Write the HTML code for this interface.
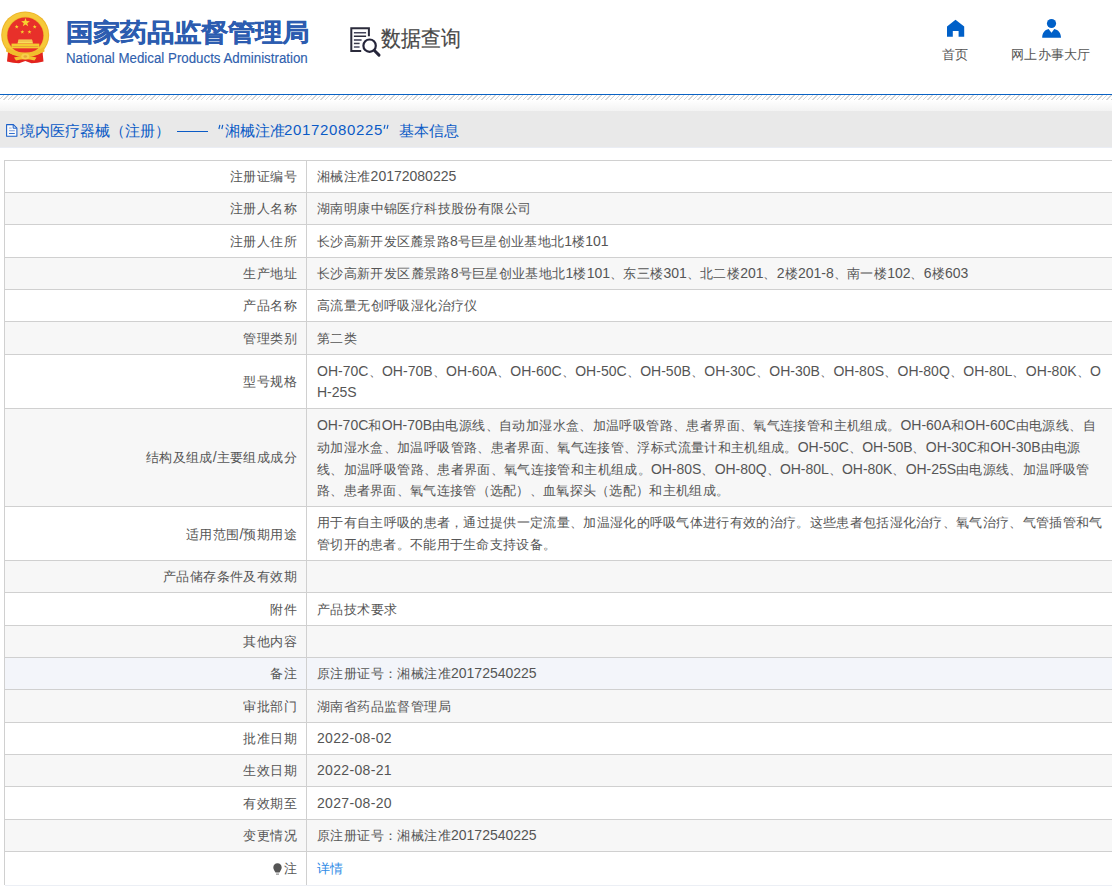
<!DOCTYPE html>
<html><head><meta charset="utf-8">
<style>
html,body{margin:0;padding:0;background:#fff;}
body{width:1112px;height:886px;overflow:hidden;position:relative;font-family:"Liberation Sans",sans-serif;color:#555;}
.abs{position:absolute;white-space:nowrap;}
#blue{position:absolute;left:0;top:94px;width:1112px;height:1px;background:#0a62c4;}
#hatch{position:absolute;left:0;top:95px;width:1112px;height:5px;
 background:repeating-linear-gradient(135deg,#fff 0,#fff 2.25px,#d6d6d6 2.25px,#d6d6d6 3.25px);}
#grad{position:absolute;left:0;top:100px;width:1112px;height:11px;background:linear-gradient(#fff,#f3f3f3);}
#bar{position:absolute;left:0;top:111px;width:1112px;height:36px;background:#e9e9e9;border-bottom:1px solid #eaedf4;}
.bt{position:absolute;top:120.6px;font-size:15px;line-height:20px;color:#0b5bc6;white-space:nowrap;}
.bt.l2{font-size:15px;letter-spacing:0.65px;}
.row{position:absolute;left:4px;width:1108px;box-sizing:border-box;border-top:1px solid #d0d0d0;border-left:1px solid #d0d0d0;}
.row .k{position:absolute;left:0;top:0;bottom:0;width:302px;border-right:1px solid #d0d0d0;display:flex;align-items:center;justify-content:flex-end;padding-right:9px;box-sizing:border-box;white-space:nowrap;font-size:13px;letter-spacing:0.4px;line-height:21.6px;}
.row .v{position:absolute;left:303px;top:0;bottom:0;right:0;display:flex;flex-direction:column;justify-content:center;padding-left:9px;white-space:nowrap;font-size:13px;line-height:21.6px;}
.ln{letter-spacing:0.4px;height:21.6px;}
.l{font-size:14px;letter-spacing:0;}
.link{color:#2f8be6;}
.bulb{display:inline-block;width:9px;height:12px;margin-right:2px;vertical-align:-1px;}
#bot{position:absolute;left:5px;width:1107px;height:1px;background:#eceff5;}
</style></head><body>
<svg class="abs" style="left:0;top:0" width="52" height="66" viewBox="0 0 52 66">
<path d="M8.5 47 L7 61.5 L13 62.8 L19 63.3 L25.3 61 L31.5 63.3 L37.5 62.8 L43.5 61.5 L42 47 Z" fill="#e3241e"/>
<ellipse cx="25.2" cy="35" rx="24" ry="23.6" fill="#eeb52a"/>
<ellipse cx="25.2" cy="35" rx="23" ry="22.6" fill="#f6c93a"/>
<circle cx="25.35" cy="35.4" r="18.6" fill="#efb32a"/>
<circle cx="25.35" cy="35.4" r="18" fill="#e8302a"/>
<polygon points="25.50,18.00 26.58,21.11 29.87,21.18 27.25,23.17 28.20,26.32 25.50,24.44 22.80,26.32 23.75,23.17 21.13,21.18 24.42,21.11" fill="#f7d230"/><polygon points="16.70,24.70 17.19,26.12 18.70,26.15 17.50,27.06 17.93,28.50 16.70,27.64 15.47,28.50 15.90,27.06 14.70,26.15 16.21,26.12" fill="#f7d230"/><polygon points="34.70,24.70 35.19,26.12 36.70,26.15 35.50,27.06 35.93,28.50 34.70,27.64 33.47,28.50 33.90,27.06 32.70,26.15 34.21,26.12" fill="#f7d230"/><polygon points="22.30,29.90 22.79,31.32 24.30,31.35 23.10,32.26 23.53,33.70 22.30,32.84 21.07,33.70 21.50,32.26 20.30,31.35 21.81,31.32" fill="#f7d230"/><polygon points="29.50,29.90 29.99,31.32 31.50,31.35 30.30,32.26 30.73,33.70 29.50,32.84 28.27,33.70 28.70,32.26 27.50,31.35 29.01,31.32" fill="#f7d230"/>
<path d="M17.5 43.5 L18.5 39.5 H32 L33 43.5 Z" fill="#f8dc5a"/>
<rect x="18" y="40.6" width="14.5" height="0.8" fill="#e9a63a"/>
<rect x="11.5" y="43.6" width="27.8" height="4.7" fill="#f5cc30"/>
<rect x="12.5" y="46.2" width="25.8" height="0.8" fill="#e69a3a"/>
<path d="M6.5 47 Q25 58 44 47 L44.5 51.5 Q25 62 6 51.5 Z" fill="#f1bd2c"/>
<path d="M8 53 L10.5 61 L19 62.5 L25.3 58 L31.5 62.5 L40 61 L42.5 53 Q25 61 8 53 Z" fill="#e3241e"/>
<path d="M14 57.5 Q25 54 36.5 57.5 L34.5 60.5 Q25 58 16 60.5 Z" fill="#f3c22e"/>
<ellipse cx="25.3" cy="56.5" rx="4" ry="3" fill="#f7d04a"/>
<ellipse cx="25.3" cy="56.5" rx="1.8" ry="1.3" fill="#e9a63a"/>
</svg>
<div class="abs" style="left:66px;top:15px;font-size:27px;line-height:32px;font-weight:bold;color:#2c5cb0;-webkit-text-stroke:0.3px #2c5cb0;transform-origin:0 0;transform:translateY(2.8px) scaleY(0.91);">国家药品监督管理局</div>
<div class="abs" style="left:66px;top:50px;font-size:14px;line-height:16px;color:#2f5fae;-webkit-text-stroke:0.15px #2f5fae;transform-origin:0 0;transform:scaleX(0.95);">National Medical Products Administration</div>
<div class="abs" style="left:381px;top:25px;font-size:22px;line-height:28px;color:#484848;-webkit-text-stroke:0.2px #484848;transform-origin:0 0;transform:scaleX(0.905);">数据查询</div>
<svg class="abs" style="left:340px;top:20px" width="50" height="40" viewBox="340 20 50 40">
 <path d="M361.2 51.1 H351.3 V28.2 H368.9 V36.3" fill="none" stroke="#2b2b3b" stroke-width="2"/>
 <rect x="353.9" y="32" width="12.2" height="1.5" fill="#44445a"/>
 <rect x="353.9" y="35.5" width="12.2" height="1.5" fill="#2b2b3b"/>
 <rect x="353.9" y="39.2" width="7.7" height="1.6" fill="#44445a"/>
 <rect x="353.9" y="42.7" width="5.7" height="1.5" fill="#3b3b4b"/>
 <rect x="353.9" y="46.2" width="5.7" height="1.6" fill="#55556a"/>
 <circle cx="369.6" cy="45.7" r="6.2" fill="none" stroke="#25253a" stroke-width="2.2"/>
 <path d="M374.4 50.5 L379 55.1" stroke="#25253a" stroke-width="3" stroke-linecap="round"/>
</svg>
<svg class="abs" style="left:930px;top:10px" width="150" height="35" viewBox="930 10 150 35">
 <path d="M947 26.6 L955.5 19.8 L964.2 26.6 V36.7 H958.6 V30.9 H952.8 V36.7 H947 Z" fill="#0060c8"/>
 <circle cx="1051.5" cy="23.5" r="4.6" fill="#0060c8"/>
 <path d="M1042.2 37.7 C1042.2 33 1044.8 29.8 1048.6 29 L1051.5 32.8 L1054.3 29 C1058.2 29.8 1061 33 1061 37.7 Z" fill="#0060c8"/>
</svg>
<div class="abs" style="left:942px;top:45.5px;font-size:13px;letter-spacing:0.3px;line-height:18px;color:#555;">首页</div>
<div class="abs" style="left:1011px;top:45.5px;font-size:13px;letter-spacing:0.3px;line-height:18px;color:#555;">网上办事大厅</div>
<div id="blue"></div>
<div id="hatch"></div>
<div id="grad"></div>
<div id="bar"></div>
<svg class="abs" style="left:0;top:110px" width="24" height="32" viewBox="0 110 24 32">
 <path d="M6.6 124.6 H13.4 L16.9 128.1 V136.3 H6.6 Z" fill="#fafafa" stroke="#1a5fc8" stroke-width="1.05" stroke-linejoin="round"/>
 <path d="M13.2 124.8 V128.2 H16.7" fill="none" stroke="#1a5fc8" stroke-width="1"/>
 <rect x="9" y="127.6" width="2.6" height="0.9" fill="#8aa6dc"/>
 <rect x="9" y="130.3" width="5.8" height="0.9" fill="#6f93d8"/>
 <rect x="9" y="133" width="5.8" height="0.9" fill="#1a5fc8"/>
</svg>
<div class="bt" style="left:20px">境内医疗器械（注册）</div>
<div class="abs" style="left:176.5px;top:131px;width:31px;height:1px;background:#0b5bc6"></div>
<svg class="abs" style="left:210px;top:118px" width="20" height="16" viewBox="210 118 20 16"><path d="M219.9 124.9 L218.9 129 M222.8 124.9 L221.8 129" stroke="#0b5bc6" stroke-width="1.15"/></svg>
<div class="bt" style="left:225px">湘械注准</div>
<div class="bt l2" id="dg" style="left:284px;top:120px">20172080225</div>
<svg class="abs" style="left:378px;top:118px" width="16" height="16" viewBox="378 118 16 16"><path d="M385 124.9 L384 128.8 M388 124.9 L387 128.8" stroke="#0b5bc6" stroke-width="1.15"/></svg>
<div class="bt" style="left:398.5px">基本信息</div>
<div class="row" style="top:160px;height:32px;background:#fff">
<div class="k">注册证编号</div>
<div class="v"><div class="ln">湘械注准<span class="l">20172080225</span></div></div>
</div>
<div class="row" style="top:192px;height:32px;background:#f7f7f7">
<div class="k">注册人名称</div>
<div class="v"><div class="ln">湖南明康中锦医疗科技股份有限公司</div></div>
</div>
<div class="row" style="top:224px;height:33px;background:#fff">
<div class="k" style="padding-top:1px">注册人住所</div>
<div class="v" style="padding-top:1px"><div class="ln" style="letter-spacing:0.309px">长沙高新开发区麓景路<span class="l" style="letter-spacing:-0.091px">8</span>号巨星创业基地北<span class="l" style="letter-spacing:-0.091px">1</span>楼<span class="l" style="letter-spacing:-0.091px">101</span></div></div>
</div>
<div class="row" style="top:257px;height:32px;background:#f7f7f7">
<div class="k">生产地址</div>
<div class="v"><div class="ln" style="letter-spacing:0.373px">长沙高新开发区麓景路<span class="l" style="letter-spacing:-0.027px">8</span>号巨星创业基地北<span class="l" style="letter-spacing:-0.027px">1</span>楼<span class="l" style="letter-spacing:-0.027px">101</span>、东三楼<span class="l" style="letter-spacing:-0.027px">301</span>、北二楼<span class="l" style="letter-spacing:-0.027px">201</span>、<span class="l" style="letter-spacing:-0.027px">2</span>楼<span class="l" style="letter-spacing:-0.027px">201-8</span>、南一楼<span class="l" style="letter-spacing:-0.027px">102</span>、<span class="l" style="letter-spacing:-0.027px">6</span>楼<span class="l" style="letter-spacing:-0.027px">603</span></div></div>
</div>
<div class="row" style="top:289px;height:32px;background:#fff">
<div class="k">产品名称</div>
<div class="v"><div class="ln">高流量无创呼吸湿化治疗仪</div></div>
</div>
<div class="row" style="top:321px;height:33px;background:#f7f7f7">
<div class="k" style="padding-top:1px">管理类别</div>
<div class="v" style="padding-top:1px"><div class="ln">第二类</div></div>
</div>
<div class="row" style="top:354px;height:54px;background:#fff">
<div class="k">型号规格</div>
<div class="v" style="padding-top:1.5px"><div class="ln" style="letter-spacing:0.424px"><span class="l" style="letter-spacing:0.024px">OH-70C</span>、<span class="l" style="letter-spacing:0.024px">OH-70B</span>、<span class="l" style="letter-spacing:0.024px">OH-60A</span>、<span class="l" style="letter-spacing:0.024px">OH-60C</span>、<span class="l" style="letter-spacing:0.024px">OH-50C</span>、<span class="l" style="letter-spacing:0.024px">OH-50B</span>、<span class="l" style="letter-spacing:0.024px">OH-30C</span>、<span class="l" style="letter-spacing:0.024px">OH-30B</span>、<span class="l" style="letter-spacing:0.024px">OH-80S</span>、<span class="l" style="letter-spacing:0.024px">OH-80Q</span>、<span class="l" style="letter-spacing:0.024px">OH-80L</span>、<span class="l" style="letter-spacing:0.024px">OH-80K</span>、<span class="l" style="letter-spacing:0.024px">O</span></div><div class="ln"><span class="l">H-25S</span></div></div>
</div>
<div class="row" style="top:408px;height:98px;background:#f7f7f7">
<div class="k">结构及组成<span class="l">/</span>主要组成成分</div>
<div class="v" style="padding-top:2px"><div class="ln" style="letter-spacing:0.382px"><span class="l" style="letter-spacing:-0.018px">OH-70C</span>和<span class="l" style="letter-spacing:-0.018px">OH-70B</span>由电源线、自动加湿水盒、加温呼吸管路、患者界面、氧气连接管和主机组成。<span class="l" style="letter-spacing:-0.018px">OH-60A</span>和<span class="l" style="letter-spacing:-0.018px">OH-60C</span>由电源线、自</div><div class="ln" style="letter-spacing:0.354px">动加湿水盒、加温呼吸管路、患者界面、氧气连接管、浮标式流量计和主机组成。<span class="l" style="letter-spacing:-0.046px">OH-50C</span>、<span class="l" style="letter-spacing:-0.046px">OH-50B</span>、<span class="l" style="letter-spacing:-0.046px">OH-30C</span>和<span class="l" style="letter-spacing:-0.046px">OH-30B</span>由电源</div><div class="ln" style="letter-spacing:0.358px">线、加温呼吸管路、患者界面、氧气连接管和主机组成。<span class="l" style="letter-spacing:-0.042px">OH-80S</span>、<span class="l" style="letter-spacing:-0.042px">OH-80Q</span>、<span class="l" style="letter-spacing:-0.042px">OH-80L</span>、<span class="l" style="letter-spacing:-0.042px">OH-80K</span>、<span class="l" style="letter-spacing:-0.042px">OH-25S</span>由电源线、加温呼吸管</div><div class="ln" style="letter-spacing:0.294px">路、患者界面、氧气连接管（选配）、血氧探头（选配）和主机组成。</div></div>
</div>
<div class="row" style="top:506px;height:54px;background:#fff">
<div class="k" style="padding-top:2px">适用范围<span class="l">/</span>预期用途</div>
<div class="v" style="padding-top:0.5px"><div class="ln" style="letter-spacing:0.314px">用于有自主呼吸的患者，通过提供一定流量、加温湿化的呼吸气体进行有效的治疗。这些患者包括湿化治疗、氧气治疗、气管插管和气</div><div class="ln" style="letter-spacing:0.282px">管切开的患者。不能用于生命支持设备。</div></div>
</div>
<div class="row" style="top:560px;height:32px;background:#f7f7f7">
<div class="k">产品储存条件及有效期</div>
<div class="v"></div>
</div>
<div class="row" style="top:592px;height:33px;background:#fff">
<div class="k" style="padding-top:1px">附件</div>
<div class="v" style="padding-top:1px"><div class="ln">产品技术要求</div></div>
</div>
<div class="row" style="top:625px;height:32px;background:#f7f7f7">
<div class="k">其他内容</div>
<div class="v"></div>
</div>
<div class="row" style="top:657px;height:32px;background:#f3f5fa">
<div class="k">备注</div>
<div class="v"><div class="ln">原注册证号：湘械注准<span class="l">20172540225</span></div></div>
</div>
<div class="row" style="top:689px;height:33px;background:#f7f7f7">
<div class="k" style="padding-top:1px">审批部门</div>
<div class="v" style="padding-top:1px"><div class="ln">湖南省药品监督管理局</div></div>
</div>
<div class="row" style="top:722px;height:32px;background:#fff">
<div class="k">批准日期</div>
<div class="v"><div class="ln" style="letter-spacing:0.733px"><span class="l" style="letter-spacing:0.333px">2022-08-02</span></div></div>
</div>
<div class="row" style="top:754px;height:32px;background:#f7f7f7">
<div class="k">生效日期</div>
<div class="v"><div class="ln" style="letter-spacing:0.733px"><span class="l" style="letter-spacing:0.333px">2022-08-21</span></div></div>
</div>
<div class="row" style="top:786px;height:33px;background:#fff">
<div class="k" style="padding-top:1px">有效期至</div>
<div class="v" style="padding-top:1px"><div class="ln" style="letter-spacing:0.733px"><span class="l" style="letter-spacing:0.333px">2027-08-20</span></div></div>
</div>
<div class="row" style="top:819px;height:32px;background:#f7f7f7">
<div class="k">变更情况</div>
<div class="v"><div class="ln">原注册证号：湘械注准<span class="l">20172540225</span></div></div>
</div>
<div class="row" style="top:851px;height:34px;background:#fff">
<div class="k"><svg class="bulb" viewBox="0 0 9 12"><path d="M4.5 0.3 C2 0.3 0.3 2.1 0.3 4.4 C0.3 6.3 1.6 7.4 2.5 9.5 H6.5 C7.4 7.4 8.7 6.3 8.7 4.4 C8.7 2.1 7 0.3 4.5 0.3 Z" fill="#555"/><rect x="3" y="10.6" width="3" height="1" fill="#777"/></svg>注</div>
<div class="v"><div class="ln link">详情</div></div>
</div>
<div id="bot" style="top:885.00px"></div>
</body></html>
